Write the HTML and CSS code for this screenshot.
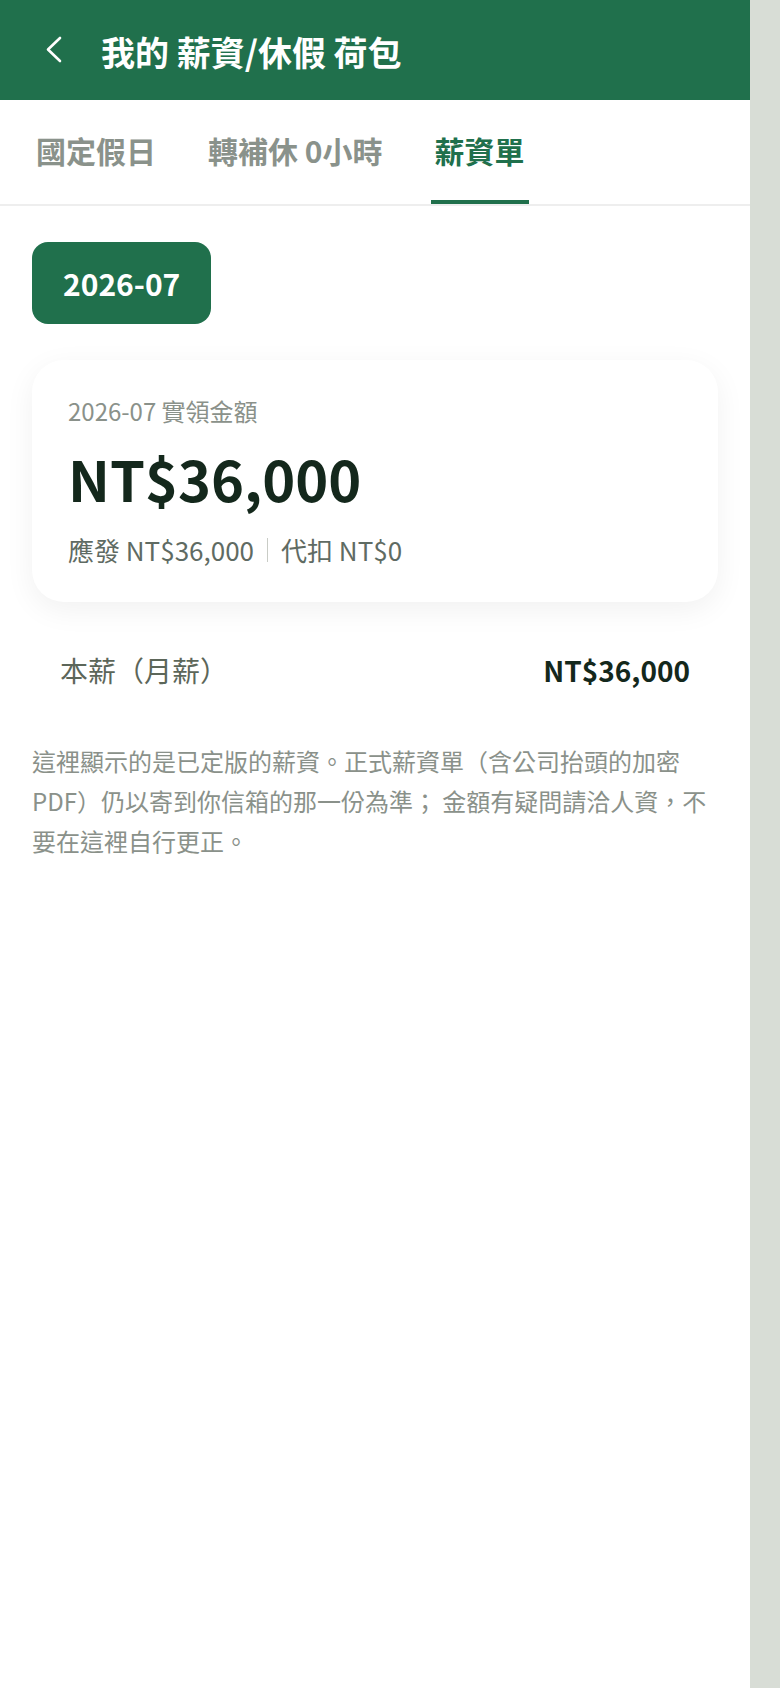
FILE: index.html
```html
<!DOCTYPE html>
<html lang="zh-Hant">
<head>
<meta charset="utf-8">
<title>我的 薪資/休假 荷包</title>
<link rel="stylesheet" href="styles.css">
</head>
<body>
<div class="app">
  <header class="topbar">
    <button class="back" aria-label="返回">
      <svg width="20" height="28" viewBox="0 0 20 28"><polyline points="15,2 3,13.5 15,25" fill="none" stroke="#ffffff" stroke-width="2.6" stroke-linecap="round" stroke-linejoin="round"/></svg>
    </button>
    <h1 class="title">我的 薪資/休假 荷包</h1>
  </header>

  <nav class="tabs">
    <div class="tab">國定假日</div>
    <div class="tab">轉補休 0小時</div>
    <div class="tab active">薪資單</div>
  </nav>

  <main class="content">
    <div class="pill">2026-07</div>

    <section class="card">
      <div class="card-label">2026-07 實領金額</div>
      <div class="card-amount">NT$36,000</div>
      <div class="card-sub">應發 NT$36,000<span class="sep"></span>代扣 NT$0</div>
    </section>

    <div class="row">
      <span class="row-label">本薪（月薪）</span>
      <span class="row-value">NT$36,000</span>
    </div>

    <p class="note">這裡顯示的是已定版的薪資。正式薪資單（含公司抬頭的加密PDF）仍以寄到你信箱的那一份為準； 金額有疑問請洽人資，不要在這裡自行更正。</p>
  </main>
</div>
</body>
</html>
```

FILE: styles.css
```css
* { box-sizing: border-box; }

html, body {
  margin: 0;
  padding: 0;
}

body {
  background: #d8ddd6;
  font-family: "Noto Sans CJK TC", "Noto Sans", sans-serif;
  min-height: 1688px;
}

.app {
  width: 750px;
  min-height: 1688px;
  background: #ffffff;
}

.topbar {
  height: 100px;
  background: #20704c;
  display: flex;
  align-items: center;
  padding-left: 45px;
  gap: 36px;
}

.back {
  background: none;
  border: 0;
  padding: 0;
  width: 20px;
  height: 28px;
  display: flex;
  cursor: pointer;
}

.title {
  margin: 0;
  color: #ffffff;
  font-size: 34px;
  font-weight: 700;
  line-height: 1;
  padding-top: 4px;
}

.tabs {
  display: flex;
  gap: 44px;
  padding-left: 32px;
  border-bottom: 2px solid #eeeeee;
}

.tab {
  height: 104px;
  padding: 0 4px;
  display: flex;
  align-items: center;
  font-size: 30px;
  font-weight: 700;
  color: #8a928b;
  border-bottom: 4px solid transparent;
  line-height: 1;
}

.tab.active {
  color: #20704c;
  border-bottom-color: #20704c;
}

.content {
  padding: 36px 32px 0;
}

.pill {
  display: inline-flex;
  align-items: center;
  height: 82px;
  padding: 0 31px;
  background: #20704c;
  color: #ffffff;
  border-radius: 16px;
  font-size: 30px;
  font-weight: 700;
}

.card {
  margin-top: 36px;
  background: #ffffff;
  border-radius: 32px;
  box-shadow: 0 8px 30px rgba(0, 0, 0, 0.06);
  padding: 34px 36px 34px;
}

.card-label {
  font-size: 24px;
  line-height: 34px;
  color: #8a918a;
}

.card-amount {
  margin-top: 16px;
  font-size: 56px;
  line-height: 68px;
  font-weight: 700;
  color: #14281c;
}

.card-sub {
  margin-top: 20px;
  font-size: 26px;
  line-height: 36px;
  color: #5f6b63;
  display: flex;
  align-items: center;
}

.sep {
  display: inline-block;
  width: 1px;
  height: 24px;
  background: #c9ccc6;
  margin: 0 13px;
}

.row {
  margin-top: 38px;
  height: 60px;
  padding: 0 28px;
  display: flex;
  align-items: center;
  justify-content: space-between;
}

.row-label {
  font-size: 28px;
  color: #5c6659;
}

.row-value {
  font-size: 28px;
  font-weight: 700;
  color: #14281c;
}

.note {
  margin: 41px 0 0;
  font-size: 24px;
  line-height: 40px;
  color: #8a918a;
}
```
